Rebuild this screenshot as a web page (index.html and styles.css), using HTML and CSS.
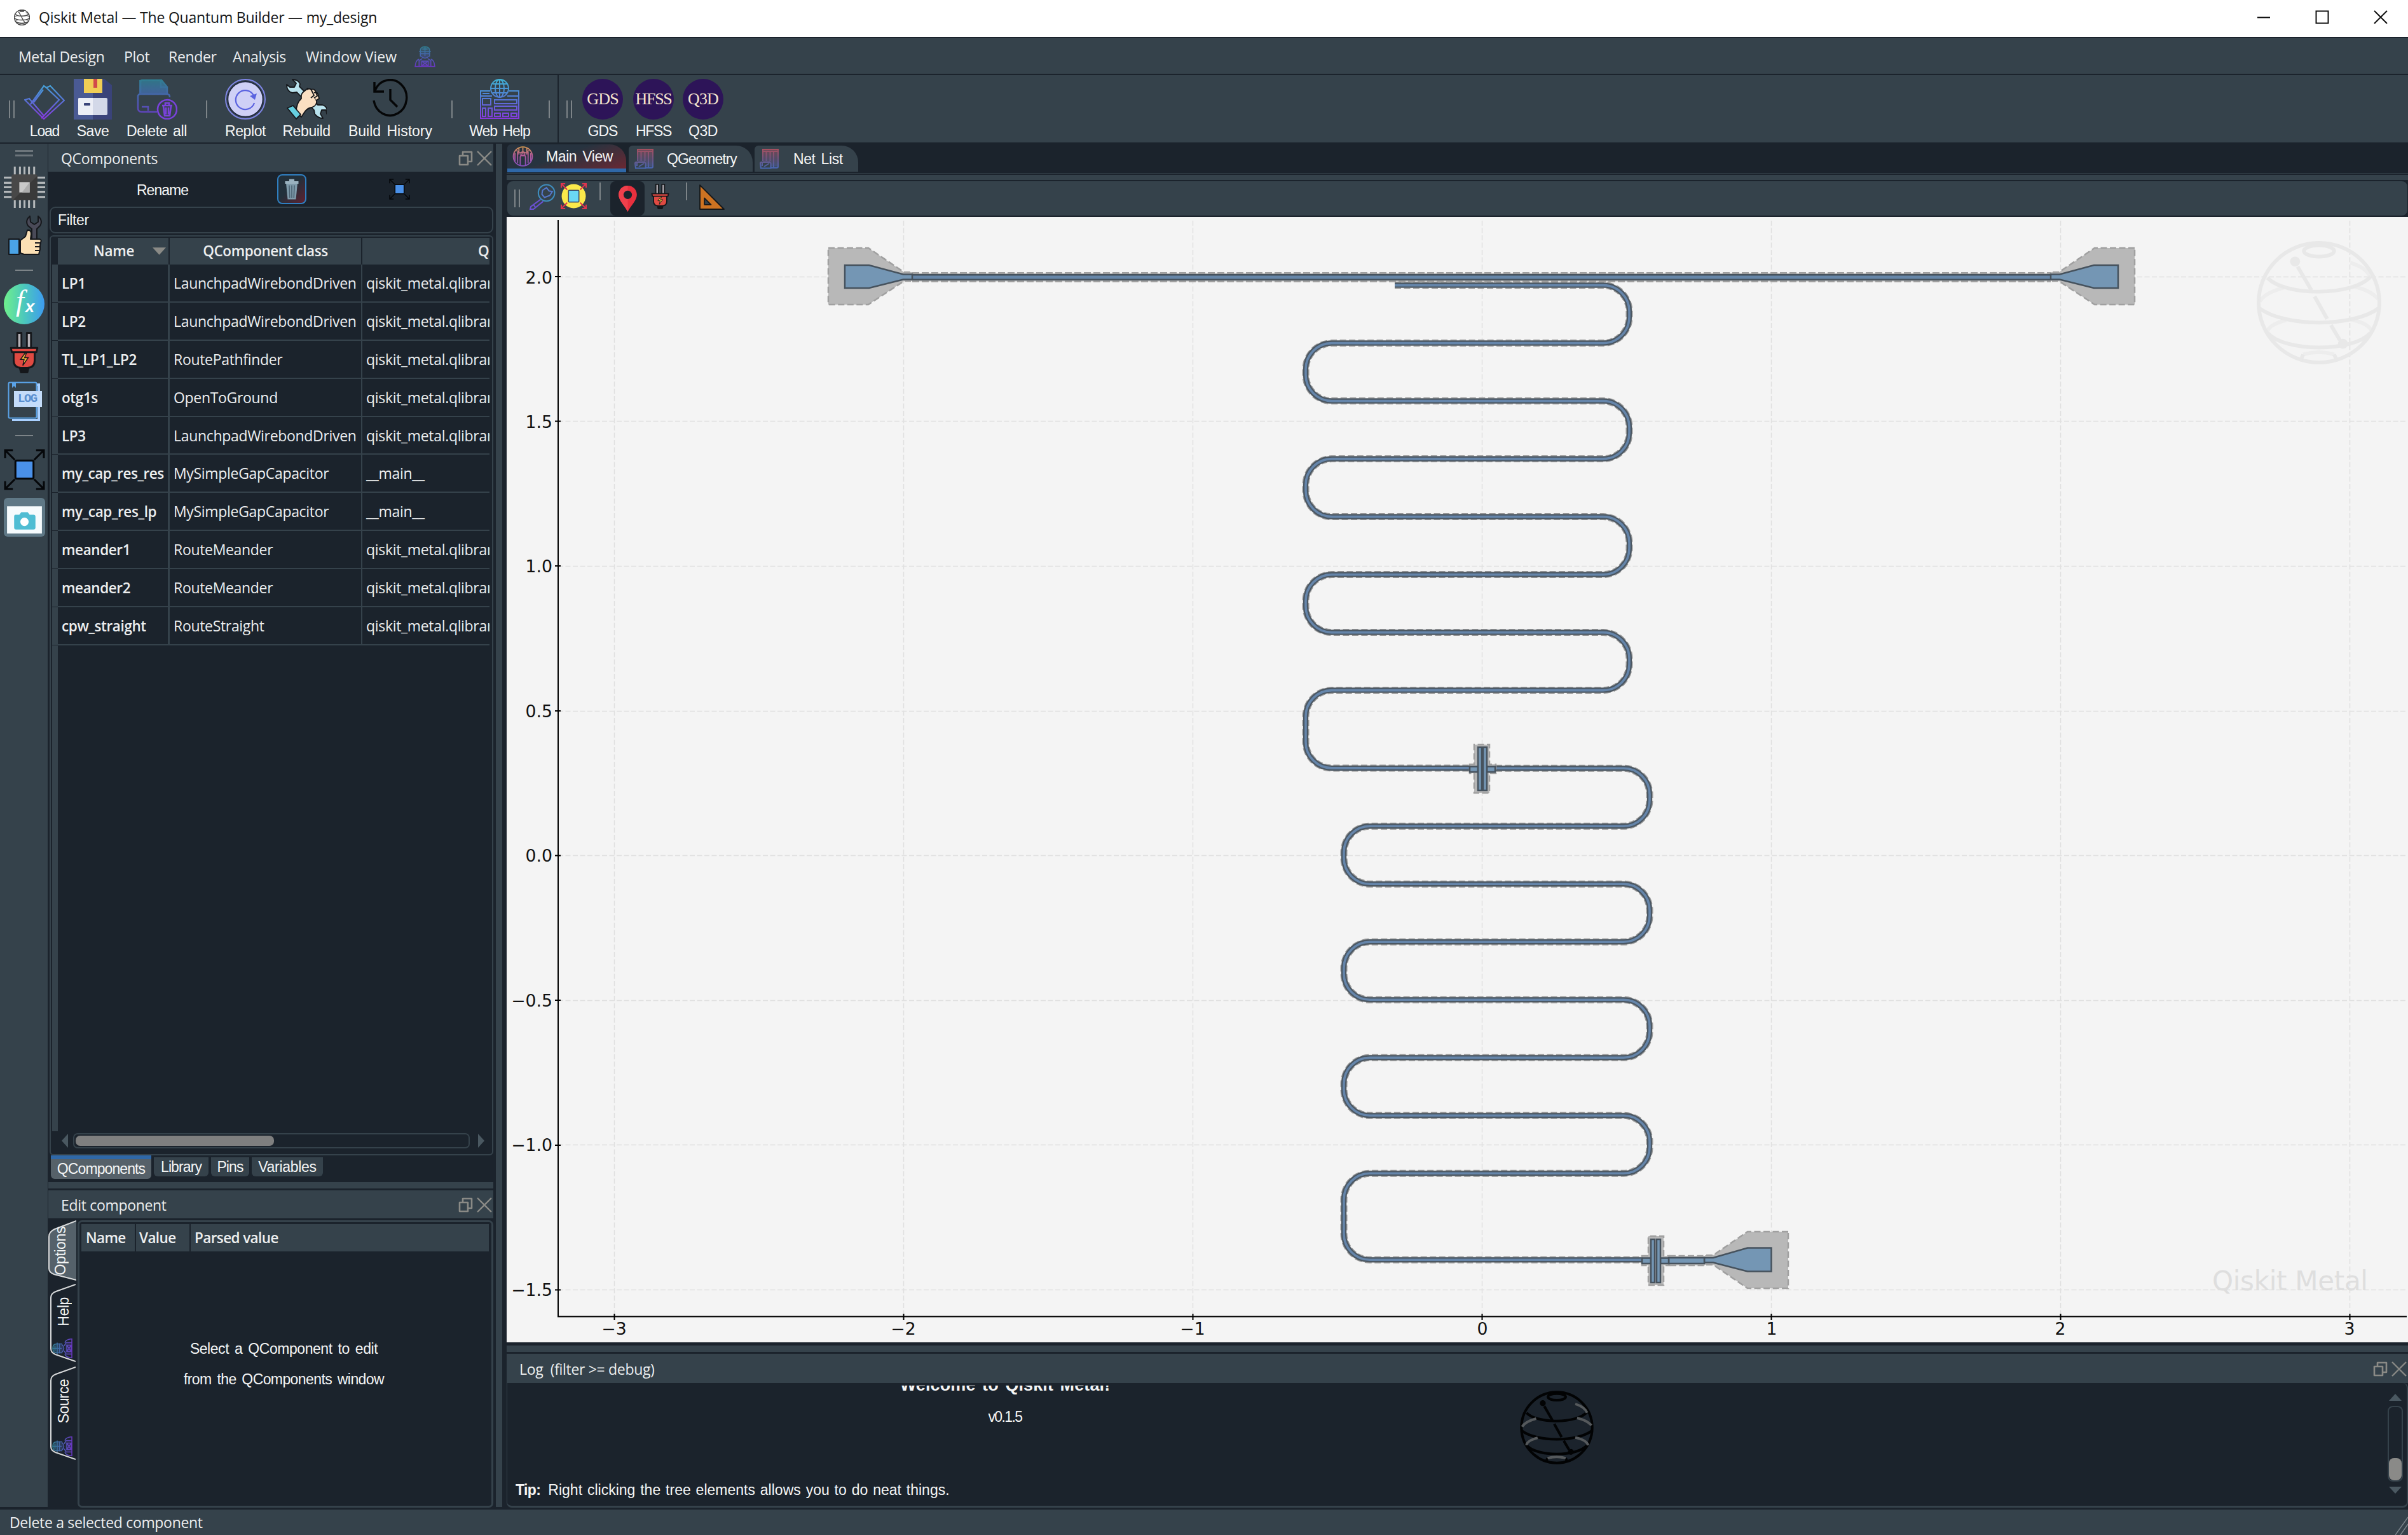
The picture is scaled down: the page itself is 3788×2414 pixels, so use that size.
FILE: index.html
```
<!DOCTYPE html>
<html lang="en">
<head>
<meta charset="utf-8">
<title>Qiskit Metal — The Quantum Builder — my_design</title>
<link rel="stylesheet" href="styles.css">
</head>
<body>
<svg class="defs" aria-hidden="true">
  <defs>
    <linearGradient id="cool" x1="0" y1="0" x2="0" y2="64" gradientUnits="userSpaceOnUse"><stop offset="0" stop-color="#3fb4d6"/><stop offset=".5" stop-color="#5577d6"/><stop offset="1" stop-color="#8a35e0"/></linearGradient>
    <linearGradient id="coolDim" x1="0" y1="0" x2="0" y2="64" gradientUnits="userSpaceOnUse"><stop offset="0" stop-color="#2f7f90"/><stop offset=".5" stop-color="#4a5fb0"/><stop offset="1" stop-color="#6a35c0"/></linearGradient>
    <linearGradient id="warm" x1="0" y1="0" x2="0" y2="64" gradientUnits="userSpaceOnUse"><stop offset="0" stop-color="#d9a04a"/><stop offset=".45" stop-color="#b55a9a"/><stop offset="1" stop-color="#7d4fc0"/></linearGradient>
    <linearGradient id="rose" x1="0" y1="0" x2="0" y2="64" gradientUnits="userSpaceOnUse"><stop offset="0" stop-color="#a8505f"/><stop offset=".5" stop-color="#6f5480"/><stop offset="1" stop-color="#4468b8"/></linearGradient>
    <symbol id="person" viewBox="0 0 64 64">
      <path d="M18 8q14-14 28 0v22q-14 12-28 0z" fill="url(#coolDim)" opacity=".35"/><path d="M14 42h36v18H14z" fill="url(#coolDim)" opacity=".25"/>
      <g fill="none" stroke="url(#coolDim)" stroke-width="3">
        <path d="M18 32V14q0-12 14-12t14 12v18M14 16h36M16 23h32M20 31q12 12 24 0M24 9h16M32 2v28M14 40q-10 2-12 22h60q-2-20-12-22M24 38l-10 6v18M40 38l10 6v18M22 46h20v14H22zM22 46l20 14M42 46L22 60"/>
      </g>
    </symbol>
    <symbol id="plug" viewBox="0 0 64 90" >
      <g stroke="#15171b" stroke-width="4" stroke-linejoin="round"><path d="M17 2h9v34h-9zM38 2h9v34h-9z" fill="#b5b1b6"/><path d="M22 76h20l-3 12H25z" fill="#15171b"/><path d="M3 35h58l-2 9H5zM9 44h46v18q0 16-16 16H25Q9 78 9 62z" fill="#e04a42"/></g>
      <path d="M34 46l-10 14h8l-3 13 12-17h-8l4-10z" fill="#f3b53a" stroke="#15171b" stroke-width="2"/>
    </symbol>
    <symbol id="expand" viewBox="0 0 64 64">
      <g fill="none" stroke="#05070a" stroke-width="3"><path d="M2 14V2h12M2 2l15 15M50 2h12v12M62 2L47 17M2 50v12h12M2 62l15-15M62 50v12H50M62 62L47 47"/></g>
      <rect x="18" y="18" width="28" height="28" rx="2" fill="#4a90e8" stroke="#05070a" stroke-width="3"/>
    </symbol>
    <symbol id="globe" viewBox="0 0 200 200">
      <g fill="none" stroke="currentColor">
        <circle cx="100" cy="100" r="96"/>
        <ellipse cx="100" cy="17" rx="24" ry="9"/>
        <path d="M18 60C45 90 155 90 182 58M4 108C45 140 155 140 196 108M18 148C45 180 155 180 182 148M75 183l-4 9M124 183l4 9M66 42l22 38M93 90l20 36M119 136l14 24"/>
        <path opacity=".6" d="M150 36Q176 44 182 60M155 74Q182 80 194 94M6 98Q14 84 44 76M150 127Q180 133 185 148M18 148Q18 136 48 128M75 183Q100 176 124 183"/>
      </g>
      <circle cx="62" cy="34" r="8" fill="currentColor"/><circle cx="138" cy="166" r="8" fill="currentColor"/>
    </symbol>
    <symbol id="float" viewBox="0 0 24 24"><path d="M7 8V2h14v15h-6M2 8h13v14H2z" fill="none" stroke="#8a8a86" stroke-width="2.6" stroke-linejoin="round"/></symbol>
    <symbol id="close" viewBox="0 0 24 24"><path d="M1 1l22 22M23 1L1 23" fill="none" stroke="#8a8a86" stroke-width="2.4"/></symbol>
    <symbol id="sheet" viewBox="0 0 64 64">
      <path d="M10 2h48v54H36V40H10z" fill="url(#rose)" opacity=".5"/>
      <path d="M10 38V2h48v54q0 4-5 4h-9V8M21 6v32M33 6v34M10 8h46M2 46q0-4 4-4h24q5 0 5 5v14H4zM8 42v12M14 56l16-10M36 60h10" fill="none" stroke="url(#rose)" stroke-width="4"/>
    </symbol>
  </defs>
</svg>

<header class="titlebar">
  <svg class="app-icon" viewBox="0 0 200 200"><use href="#globe"/></svg>
  <span class="ui app-title">Qiskit Metal — The Quantum Builder — my_design</span>
  <div class="window-controls">
    <svg viewBox="0 0 22 22"><path d="M1 11.500h20" /></svg>
    <svg viewBox="0 0 22 22"><rect x="1.500" y="1.500" width="19" height="19"/></svg>
    <svg viewBox="0 0 22 22"><path d="M1 1l20 20M21 1L1 21"/></svg>
  </div>
</header>

<nav class="menubar ui">
  <span class="m1">Metal Design</span><span class="m2">Plot</span><span class="m3">Render</span><span class="m4">Analysis</span><span class="m5">Window View</span>
  <svg class="menu-icon"><use href="#person"/></svg>
</nav>

<div class="toolbar">
  <i class="handle"></i>
  <div class="tool t-load"><svg viewBox="0 0 64 64"><g fill="none" stroke="url(#cool)" stroke-width="2.200"><path d="M10 40L31 11l4 3 6-3 22 23-32 29L1 33l7-2 23 27 24-25-20-19M30 17L15 37M27 62l4-4"/></g></svg><span>Load</span></div>
  <div class="tool t-save"><svg viewBox="0 0 64 64"><path d="M2 0h48l12 10v54H2z" fill="#3a4379"/><path d="M2 0h30v64H2z" fill="#4a5a94"/><path d="M18 0h29v22H18z" fill="#f0cd55"/><path d="M33 0h6v14h-6z" fill="#d24a4a"/><rect x="9" y="30" width="46" height="27" rx="2" fill="#d3d8e8"/><path d="M11 30h21v27H11q-2 0-2-2V32q0-2 2-2z" fill="#eceef6"/><rect x="18" y="38" width="10" height="4" rx="1" fill="#3a4379"/></svg><span>Save</span></div>
  <div class="tool t-delete"><svg viewBox="0 0 64 64"><path d="M4 2h36l8 10v13H4z" fill="url(#coolDim)" opacity=".85"/><g fill="none" stroke="url(#coolDim)" stroke-width="2.500"><path d="M6 22V5q0-3 3-3h30l9 11v11M38 2v11h10M2 28q0-4 4-4h42q4 0 4 5M2 26v20q0 6 6 6h24M8 44h10v6"/></g><g fill="none" stroke="#7a42dc" stroke-width="2.600"><ellipse cx="48" cy="48" rx="15" ry="15"/><path d="M40 42h16M45 42v-4h6v4M42 43l2 15h8l2-15M46 45v11M50 45v11"/></g></svg><span>Delete all</span></div>
  <i class="sep s1"></i>
  <div class="tool t-replot"><svg viewBox="0 0 64 64"><circle cx="32" cy="32" r="31" fill="none" stroke="#7f86e6" stroke-width="2"/><circle cx="32" cy="32" r="27.500" fill="#cfd0f6" stroke="#1d2340" stroke-width="1.500"/><path d="M45 26a15 15 0 1 0 1 12" fill="none" stroke="#5a62e0" stroke-width="2.200"/><path d="M50 23l-3 10-8-6z" fill="#5a62e0"/></svg><span>Replot</span></div>
  <div class="tool t-rebuild"><svg viewBox="0 0 64 64"><g stroke="#15171b" stroke-width="1.800" stroke-linejoin="round"><path d="M10 1l6 6-3 6-7 0-5-4q0 11 9 13l7-1 27 28 1 6q5 7 13 7l-4-7 2-6 7 0 1 6q3-11-7-14l-7 0-29-29 1-4q-3-7-12-7z" fill="#b9e3ee"/><path d="M16 52q0-14 8-21-1-8 4-11l6-5q6 2 9 9l5 11q1 7-8 10-6 1-10 6l-6 9z" fill="#fadfc2"/><path d="M33 17q5-3 7 1l4 8-5 4M39 17q5-2 7 2l3 8-5 3M44 22q5-2 6 2l2 7-5 3" fill="#fadfc2"/><path d="M2 46l9-4 12 14-7 7z" fill="#66cfe0"/></g></svg><span>Rebuild</span></div>
  <div class="tool t-history"><svg viewBox="0 0 64 64"><path d="M8 18A26 28 0 1 1 6 34M7 5v15h15M32 16v17l11 11" fill="none" stroke="#050607" stroke-width="3.400"/></svg><span>Build History</span></div>
  <i class="sep s2"></i>
  <div class="tool t-web"><svg viewBox="0 0 64 64"><g fill="none" stroke="url(#cool)" stroke-width="2"><path d="M17 19H2v43h60V19H47M2 27h18M44 27h18M5 23h11M5 31h13v10H5zM5 46h5v13H5zM14 46h6v13h-6zM24 33h35v6H24zM24 43h35v6H24zM24 54h9v5h-9zM37 54h9v5h-9zM50 54h9v5h-9z"/><circle cx="32" cy="15" r="14"/><ellipse cx="32" cy="15" rx="7" ry="14"/><path d="M32 1v28M18 15h28M21 8h22M21 22h22"/></g></svg><span>Web Help</span></div>
  <i class="sep s3"></i>
  <i class="handle h2"></i>
  <div class="tool t-gds"><b class="disc">GDS</b><span>GDS</span></div>
  <div class="tool t-hfss"><b class="disc">HFSS</b><span>HFSS</span></div>
  <div class="tool t-q3d"><b class="disc">Q3D</b><span>Q3D</span></div>
</div>

<main class="work">
  <aside class="rail">
    <i class="rail-handle"></i>
    <svg class="r-chip" viewBox="0 0 64 64"><path d="M17 0v64M25 0v64M32 0v64M39 0v64M47 0v64M0 17h64M0 25h64M0 32h64M0 39h64M0 47h64" stroke="#b4b8ba" stroke-width="3"/><rect x="12" y="12" width="40" height="40" rx="3" fill="#484848"/><path d="M52 14v36q0 2-2 2H14z" fill="#3a3a3a"/><rect x="24" y="24" width="16" height="16" fill="#c9c9c9"/><path d="M40 24v16H28z" fill="#adadad"/></svg>
    <svg class="r-thumb" viewBox="0 0 54 64"><g stroke="#15171b" stroke-width="2" stroke-linejoin="round"><path d="M35 2q-8 7-3 15l6 5v18h8V22l5-5q5-8-3-15l0 9-6 4-6-4z" fill="#4a4a58"/><path d="M2 38h16v24H2z" fill="#4aa3e6"/><path d="M20 40l8-6 3-10q6-1 6 6l-1 8h14q4 1 2 5l-1 5 0 6-2 8H26l-6-2z" fill="#fbe0b4"/></g><path d="M43 44h10M43 50h9M43 56h8" stroke="#15171b" stroke-width="2"/></svg>
    <i class="rail-sep"></i>
    <div class="r-fx"><span class="fx-f">f</span><span class="fx-x">x</span></div>
    <svg class="r-plug" preserveAspectRatio="none" viewBox="0 0 64 90"><use href="#plug" width="64" height="90"/></svg>
    <div class="r-log"><svg viewBox="0 0 54 62"><path d="M7 61h42V5h-4" fill="none" stroke="#a9d0ff" stroke-width="4"/><rect x="1.500" y="1.500" width="44" height="56" rx="2" fill="#35424b" stroke="#5aa2e6" stroke-width="2"/><path d="M7 2v8l3-3 3 3V2z" fill="#5aa2e6"/><rect x="10" y="15" width="44" height="25" fill="#c4dcfa"/></svg><span>LOG</span></div>
    <i class="rail-sep"></i>
    <svg class="r-expand" viewBox="0 0 64 64"><use href="#expand"/></svg>
    <svg class="r-camera" viewBox="0 0 64 60"><rect width="64" height="60" rx="6" fill="#5f7886"/><path d="M5 13h54v42H5z" fill="#f6fbfd"/><path d="M18 26h6l3-4h10l3 4h6q3 0 3 3v17q0 3-3 3H19q-3 0-3-3V29q0-3 2-3z" fill="#4fbdd3"/><circle cx="32" cy="37" r="6.500" fill="#fff"/></svg>
  </aside>

  <section class="dock">
    <div class="dock-title ui"><span>QComponents</span><svg><use href="#float"/></svg><svg><use href="#close"/></svg></div>
    <div class="actions">
      <span class="rename">Rename</span>
      <span class="trash"><svg viewBox="0 0 28 42"><path d="M3 10h22l-3 30H6z" fill="#7f9bab"/><path d="M1 5h26v5H1zM9 1h10v5H9z" fill="#9ab2c0"/><path d="M9 13l1 24M14 13v24M19 13l-1 24" stroke="#4b6272" stroke-width="2"/></svg></span>
      <svg class="zoom-sel" viewBox="0 0 64 64"><use href="#expand"/></svg>
    </div>
    <div class="filter">Filter</div>
    <div class="table-panel">
      <div class="grid-head bold"><i></i><span class="c-name">Name<svg viewBox="0 0 20 11"><path d="M0 0h20L10 11z" fill="#8a8a86"/></svg></span><span class="c-class">QComponent class</span><span class="c-mod">QComponent module</span></div>
      <div class="grid-row ui"><i></i><b>LP1</b><span>LaunchpadWirebondDriven</span><span>qiskit_metal.qlibrary</span></div>
      <div class="grid-row ui"><i></i><b>LP2</b><span>LaunchpadWirebondDriven</span><span>qiskit_metal.qlibrary</span></div>
      <div class="grid-row ui"><i></i><b>TL_LP1_LP2</b><span>RoutePathfinder</span><span>qiskit_metal.qlibrary</span></div>
      <div class="grid-row ui"><i></i><b>otg1s</b><span>OpenToGround</span><span>qiskit_metal.qlibrary</span></div>
      <div class="grid-row ui"><i></i><b>LP3</b><span>LaunchpadWirebondDriven</span><span>qiskit_metal.qlibrary</span></div>
      <div class="grid-row ui"><i></i><b class="tight">my_cap_res_res</b><span>MySimpleGapCapacitor</span><span>__main__</span></div>
      <div class="grid-row ui"><i></i><b>my_cap_res_lp</b><span>MySimpleGapCapacitor</span><span>__main__</span></div>
      <div class="grid-row ui"><i></i><b>meander1</b><span>RouteMeander</span><span>qiskit_metal.qlibrary</span></div>
      <div class="grid-row ui"><i></i><b>meander2</b><span>RouteMeander</span><span>qiskit_metal.qlibrary</span></div>
      <div class="grid-row ui"><i></i><b>cpw_straight</b><span>RouteStraight</span><span>qiskit_metal.qlibrary</span></div>
      <div class="grid-rest"><i></i></div>
      <div class="hscroll"><svg viewBox="0 0 10 22"><path d="M10 0v22L0 11z"/></svg><div class="htrack"><i></i></div><svg viewBox="0 0 10 22"><path d="M0 0v22l10-11z"/></svg></div>
    </div>
    <div class="dock-tabs"><span class="on">QComponents</span><span class="d2">Library</span><span class="d3">Pins</span><span class="d4">Variables</span></div>
    <div class="band"></div>
    <div class="dock-title ui"><span>Edit component</span><svg><use href="#float"/></svg><svg><use href="#close"/></svg></div>
    <div class="edit">
      <div class="side-tabs">
        <div class="side-tab s-opt"><svg viewBox="0 0 44 95"><path d="M44 1L10 14Q1 18 1 26v50q0 6 8 9l35 9z" fill="#55616a"/><path d="M44 1L10 14Q1 18 1 26v50q0 6 8 9l35 9" fill="none" stroke="#d8dadb" stroke-width="2"/></svg><span>Options</span></div>
        <div class="side-tab s-help"><svg viewBox="0 0 41 123"><path d="M41 1L10 12Q2 15 2 22v80q0 6 7 9l32 11" fill="none" stroke="#d8dadb" stroke-width="2"/></svg><span>Help</span><svg class="s-ico"><use href="#person"/></svg></div>
        <div class="side-tab s-src"><svg viewBox="0 0 41 147"><path d="M41 1L10 12Q2 15 2 22v104q0 6 7 9l32 11" fill="none" stroke="#d8dadb" stroke-width="2"/></svg><span>Source</span><svg class="s-ico"><use href="#person"/></svg></div>
      </div>
      <div class="edit-panel">
        <div class="edit-head bold"><span>Name</span><span>Value</span><span>Parsed value</span></div>
        <div class="edit-msg"><p>Select a QComponent to edit</p><p class="p2">from the QComponents window</p></div>
      </div>
    </div>
  </section>

  <div class="splitter"></div>

  <section class="center">
    <div class="view-tabs">
      <div class="vtab on"><svg viewBox="0 0 64 64"><g fill="none" stroke="url(#warm)" stroke-width="3.500"><circle cx="32" cy="32" r="29"/><path d="M12 14q20 12 40 0M8 22v24M16 16v36M48 16v36M56 22v24M24 60V34q0-6 8-6t8 6v26M32 6v18M20 6v20M44 6v20"/><circle cx="32" cy="24" r="6"/></g></svg><span>Main View</span></div>
      <div class="vtab v2"><svg><use href="#sheet"/></svg><span>QGeometry</span></div>
      <div class="vtab v3"><svg><use href="#sheet"/></svg><span>Net List</span></div>
    </div>
    <div class="view-band"></div>
    <div class="plot-bar">
      <i class="handle"></i>
      <svg class="p-zoom" viewBox="0 0 40 40"><g fill="none" stroke="#5578cc" stroke-width="2"><circle cx="26" cy="14" r="12.500" stroke="#3f8fc0"/><path d="M17 24L2 35l-1 4 5 0 15-12M6 32l3 4" stroke="#6a50d0"/><path d="M26 6l4 5 5 1-4 6-8 3-4-5 1-6z"/></g></svg>
      <svg class="p-home" viewBox="0 0 40 40"><circle cx="20" cy="20" r="18.500" fill="#fbe94a"/><rect x="12" y="11" width="16" height="18" rx="1" fill="#6ad8f5" stroke="#3c4a6a" stroke-width="1.500"/><path d="M1 7V1h6M1 1l9 9M33 1h6v6M39 1l-9 9M1 33v6h6M1 39l9-9M39 33v6h-6M39 39l-9-9" fill="none" stroke="#e0344e" stroke-width="2"/></svg>
      <i class="psep q1"></i>
      <span class="pin-btn"><svg viewBox="0 0 28 40"><path d="M14 0C6 0 0 6 0 14c0 9 9 16 14 26 5-10 14-17 14-26C28 6 22 0 14 0z" fill="#e8303e"/><path d="M14 0C6 0 0 6 0 14c0 9 9 16 14 26z" fill="#f0404c"/><circle cx="14" cy="14" r="6.500" fill="#1b232c"/></svg></span>
      <svg class="p-plug" preserveAspectRatio="none" viewBox="0 0 64 90"><use href="#plug" width="64" height="90"/></svg>
      <i class="psep q2"></i>
      <svg class="p-tri" viewBox="0 0 40 40"><path d="M2 2v37h37zM9 22v10h10z" fill="#cd7322" fill-rule="evenodd" stroke="#14171a" stroke-width="1.800" stroke-linejoin="round"/></svg>
    </div>
    <svg class="plot" viewBox="797 341 2991 1770">
      <path class="gridline" d="M966.500 347V2070M1421.500 347V2070M1876.500 347V2070M2331.500 347V2070M2786.500 347V2070M3241.500 347V2070M3696.500 347V2070M878 435.500H3784M878 662.500H3784M878 890.500H3784M878 1118.500H3784M878 1345.500H3784M878 1573.500H3784M878 1800.500H3784M878 2028.500H3784"/>
      <g class="watermark"><svg x="3549" y="378" width="198" height="196" viewBox="0 0 200 200" preserveAspectRatio="none"><use href="#globe"/></svg>
      <text x="3480" y="2029" textLength="245">Qiskit Metal</text></g>
      <g class="gap">
        <path d="M1303 390H1366L1422 428H1435V442H1422L1366 479H1303z"/>
        <path d="M3358 390H3295L3239 428H3226V442H3239L3295 479H3358z"/>
        <path d="M2813 1937H2749L2695 1974H2682V1989H2695L2749 2026H2813z"/>
        <path d="M2626 1975H2682V1990H2626z"/>
      </g>
      <path class="tl-gap" d="M1435 436H3226"/>
      <path class="tl-edge" d="M1435 429.500H3226M1435 442.500H3226"/>
      <defs>
        <path id="me1" d="M2194 448.600H2522a41 41 0 0 1 41 41v9a41 41 0 0 1-41 41H2095a41 41 0 0 0-41 41v9a41 41 0 0 0 41 41H2522a41 41 0 0 1 41 41v9a41 41 0 0 1-41 41H2095a41 41 0 0 0-41 41v9a41 41 0 0 0 41 41H2522a41 41 0 0 1 41 41v9a41 41 0 0 1-41 41H2095a41 41 0 0 0-41 41v9a41 41 0 0 0 41 41H2522a41 41 0 0 1 41 41v9a41 41 0 0 1-41 41H2095a41 41 0 0 0-41 41v40.300a41 41 0 0 0 41 41H2312"/>
        <path id="me2" d="M2353 1208.300H2554a41 41 0 0 1 41 41v9a41 41 0 0 1-41 41H2155a41 41 0 0 0-41 41v9a41 41 0 0 0 41 41H2554a41 41 0 0 1 41 41v9a41 41 0 0 1-41 41H2155a41 41 0 0 0-41 41v9a41 41 0 0 0 41 41H2554a41 41 0 0 1 41 41v9a41 41 0 0 1-41 41H2155a41 41 0 0 0-41 41v9a41 41 0 0 0 41 41H2554a41 41 0 0 1 41 41v9a41 41 0 0 1-41 41H2155a41 41 0 0 0-41 41v54a41 41 0 0 0 41 41H2583"/>
      </defs>
      <path class="tl-core" d="M1435 436H3226"/><path class="tl-fill" d="M1435 436H3226"/>
      <g class="m-gap"><use href="#me1"/><use href="#me2"/></g>
      <g class="m-edge"><use href="#me1"/><use href="#me2"/></g>
      <g class="m-core"><use href="#me1"/><use href="#me2"/></g>
      <g class="m-fill"><use href="#me1"/><use href="#me2"/></g>
      <g class="gap">
        <path d="M2312 1202H2319V1171H2343V1202H2353V1216H2343V1247H2319V1216H2312z"/>
        <path d="M2583 1975H2593V1944H2617V1975H2626V1990H2617V2021H2593V1990H2583z"/>
      </g>
      <g class="metal">
        <path d="M1329 417H1367L1421 431.500H1435V439.500H1421L1367 453H1329z"/>
        <path d="M3332 417H3294L3240 431.500H3226V439.500H3240L3294 453H3332z"/>
        <path d="M2786.500 1962.500H2749L2695 1978H2681V1985.500H2695L2749 1999.500H2786.500z"/>
        <path d="M2625 1978H2681V1987H2625z"/>
        <path d="M2312 1205.500H2325V1214H2312zM2339 1205.500H2352V1214H2339zM2583 1978.500H2597V1987H2583zM2612 1978.500H2625V1987H2612z"/>
        <path d="M2325 1175H2331V1243H2325zM2333 1175H2339V1243H2333zM2597 1949H2603V2017H2597zM2606 1949H2612V2017H2606z"/>
      </g>
      <path class="axis" d="M878 346V2070.500H3786M873 435H882M873 662.500H882M873 890H882M873 1118H882M873 1345.500H882M873 1573H882M873 1801H882M873 2028.500H882M966.500 2066V2076M1421.500 2066V2076M1876.500 2066V2076M2331.500 2066V2076M2786.500 2066V2076M3241.500 2066V2076M3696.500 2066V2076"/>
      <g class="ticks end"><text x="869" y="446">2.0</text><text x="869" y="673">1.5</text><text x="869" y="900">1.0</text><text x="869" y="1128">0.5</text><text x="869" y="1355">0.0</text><text x="869" y="1583">−0.5</text><text x="869" y="1810">−1.0</text><text x="869" y="2038">−1.5</text></g>
      <g class="ticks mid"><text x="966" y="2099">−3</text><text x="1421" y="2099">−2</text><text x="1876" y="2099">−1</text><text x="2332" y="2099">0</text><text x="2787" y="2099">1</text><text x="3241" y="2099">2</text><text x="3696" y="2099">3</text></g>
    </svg>
    <div class="band log-band"></div>
    <div class="dock-title log-title ui"><span>Log&nbsp; (filter &gt;= debug)</span><svg><use href="#float"/></svg><svg><use href="#close"/></svg></div>
    <div class="log">
      <div class="log-body">
        <div class="log-top">
          <div class="log-welcome"><p class="welcome">Welcome to Qiskit Metal!</p><p class="version">v0.1.5</p></div>
          <svg class="log-logo" viewBox="0 0 200 200"><use href="#globe"/><path d="M150 36Q176 44 182 60M155 74Q182 80 194 94M6 98Q14 84 44 76M150 127Q180 133 185 148M18 148Q18 136 48 128M75 183Q100 176 124 183" fill="none" stroke="#55595c"/></svg>
        </div>
        <p class="tip"><b>Tip:</b><span>Right clicking the tree elements allows you to do neat things.</span></p>
      </div>
      <div class="vscroll"><svg viewBox="0 0 20 11"><path d="M0 11h20L10 0z"/></svg><div class="vtrack"><i></i></div><svg viewBox="0 0 20 11"><path d="M0 0h20L10 11z"/></svg></div>
    </div>
  </section>
</main>

<footer class="status ui"><span>Delete a selected component</span><svg viewBox="0 0 20 30"><path d="M0 30L20 2M8 30L20 13" stroke="#7d868c" stroke-width="1.500"/></svg></footer>
</body>
</html>
```
FILE: styles.css
```
:root{--light:#35424b;--dark:#1b232c;--text:#eceeef;--blue:#2f68a8}
*{box-sizing:border-box}
body{margin:0;width:3788px;height:2414px;overflow:hidden;display:flex;flex-direction:column;background:var(--dark);color:#f4f5f5;font:23px/28px "Liberation Sans",sans-serif;letter-spacing:-.4px;word-spacing:3px}
svg{display:block;flex:none}
p{margin:0}
i{display:block;flex:none}
.defs{position:absolute;width:0;height:0}
.ui{font-family:"Open Sans",sans-serif;font-size:23px;line-height:32px;letter-spacing:-.32px;word-spacing:0;color:var(--text)}
.bold{font-family:"Open Sans",sans-serif;font-weight:600;font-size:22.5px;line-height:32px;letter-spacing:-.45px;word-spacing:0;color:var(--text)}

.titlebar{height:60px;flex:none;background:#fff;border-bottom:2px solid var(--dark);display:flex;align-items:center;padding:0 32px 4px 22px}
.app-icon{width:25px;height:25px;color:#444;stroke-width:11}
.app-title{color:#151515;margin-left:14px;flex:1;letter-spacing:-.2px}
.window-controls{display:flex;gap:70px;fill:none;stroke:#111;stroke-width:2}
.window-controls svg{width:22px;height:22px}

.menubar{height:58px;flex:none;background:var(--light);border-bottom:2px solid var(--dark);display:flex;align-items:center;white-space:nowrap;padding:2px 0 0 29px}
.m1{width:166px}.m2{width:70px}.m3{width:101px}.m4{width:115px}.m5{width:171px}
.m5{letter-spacing:0}
.menu-icon{width:33px;height:34px}

.toolbar{height:108px;flex:none;background:var(--light);border-bottom:2px solid var(--dark);display:flex;padding-top:6px}
.handle{width:14px;height:28px;margin:34px 0 0 14px;border-left:2px solid #7d8488}
.handle::after{content:"";display:block;margin-left:5px;height:28px;border-left:2px solid #7d8488}
.h2{margin-left:12px;width:19px}
.tool{display:flex;flex-direction:column;align-items:center;flex:none;white-space:nowrap}
.tool svg{width:64px;height:64px}
.tool span{margin-top:4px}
.t-load{width:84px;letter-spacing:-1.2px}.t-save{width:68px;letter-spacing:-.5px}.t-delete{width:133px}.t-replot{width:100px}.t-rebuild{width:92px}.t-history{width:172px;letter-spacing:0}.t-web{width:128px;letter-spacing:-1px}.t-gds{width:76px;letter-spacing:-1px}.t-hfss{width:84px;letter-spacing:-1.3px}.t-q3d{width:72px}
.sep{height:100px;padding-top:34px}
.sep::before{content:"";display:block;width:2px;height:28px;margin:0 auto;background:#7d8488}
.s1{width:23px}.s2{width:22px}.s3{width:29px;border-right:2px solid var(--dark);margin-top:-6px;padding-top:40px;height:106px}
.disc{width:64px;height:64px;border-radius:50%;background:#2d1458;color:#f6e6cf;font:26px/64px "Liberation Serif",serif;text-align:center;letter-spacing:-.8px}
.t-hfss .disc{letter-spacing:-1.3px}

.work{height:2147px;flex:none;display:flex}
.rail{width:76px;height:2144px;background:var(--light);border-right:1px solid var(--dark);display:flex;flex-direction:column;align-items:flex-start;flex:none}
.rail-handle{width:28px;height:10px;margin:10px 0 0 24px;border:solid #6c757b;border-width:3px 0}
.r-chip{width:65px;height:65px;margin:16px 0 0 6px}
.r-thumb{width:54px;height:64px;margin:11px 0 0 12px}
.rail-sep{width:28px;height:2px;background:#7d8488;margin:22px 0 0 24px}
.r-fx{width:64px;height:64px;margin:20px 0 0 6px;border-radius:50%;background:linear-gradient(90deg,#6ff08c,#4cc8bc 50%,#3d9bf0);color:#fff;display:flex;padding-left:19px;letter-spacing:0}
.fx-f{font:italic 46px/54px "Liberation Serif",serif}
.fx-x{font:bold italic 26px/72px "Liberation Sans",sans-serif;margin-left:2px}
.r-plug{width:46px;height:65px;margin:12px 0 0 15px}
.r-log{width:54px;height:62px;margin:13px 0 0 12px;display:grid}
.r-log svg,.r-log span{grid-area:1/1}
.r-log span{font:19px/24px "Liberation Mono",monospace;color:#5a8fd0;padding:15px 0 0 16px;letter-spacing:-1.5px;font-weight:bold}
.r-log+.rail-sep{margin-top:22px}
.r-expand{width:65px;height:65px;margin:20px 0 0 6px}
.r-camera{width:65px;height:61px;margin:12px 0 0 6px}

.dock{width:700px;flex:none;display:flex;flex-direction:column}
.dock-title{height:44px;flex:none;background:var(--light);display:flex;align-items:center;padding:1px 2px 0 20px}
.dock-title span{flex:1}
.dock-title svg{width:24px;height:24px;margin-left:5px}
.actions{height:55px;flex:none;display:flex;align-items:center;padding-left:139px}
.rename{width:221px;letter-spacing:-1px;padding-top:2px}
.trash{width:46px;height:47px;border:2px solid #2f7fc1;border-radius:8px;background:linear-gradient(135deg,#22303b 45%,#5f2130);display:flex;align-items:center;justify-content:center}
.trash svg{width:24px;height:34px}
.zoom-sel{width:33px;height:33px;margin-left:130px}
.filter{height:42px;flex:none;margin-left:2px;border:2px solid var(--light);border-radius:9px;padding:5px 0 0 11px}
.table-panel{height:1447px;flex:none;margin:3px 0 0 2px;border:2px solid var(--light);border-radius:6px;padding:2px 4px 0 2px;display:flex;flex-direction:column}
.grid-head,.grid-row{display:grid;grid-template-columns:9px 176px 303px 1fr;white-space:nowrap}
.grid-head{height:42px;align-items:stretch}
.grid-head span{background:var(--light);display:flex;align-items:center;border-right:2px solid var(--dark);overflow:hidden}
.grid-head .c-name{padding-left:56px;letter-spacing:-.2px}
.c-name svg{width:21px;height:12px;margin-left:29px}
.grid-head .c-class{justify-content:center}
.grid-head .c-mod{padding-left:182px;border-right:0}
.grid-row{height:59.9px}
.grid-row i{background:var(--light);border-bottom:1px solid var(--dark)}
.grid-row b,.grid-row span{border-right:2px solid var(--light);border-bottom:2px solid var(--light);overflow:hidden;padding-left:6px;line-height:59px}
.grid-row b{font-weight:600;font-size:22.5px;letter-spacing:-.4px;border-right-width:3px}
.grid-row .tight{letter-spacing:-.5px}
.grid-row span:last-child{border-right:0}
.grid-rest{flex:1}
.grid-rest i{width:9px;height:100%;background:var(--light)}
.hscroll{height:36px;display:flex;align-items:center;padding:0 7px 6px 15px;gap:8px;fill:#4a5861}
.hscroll svg{width:10px;height:22px}
.htrack{width:624px;height:24px;border:2px solid var(--light);border-radius:7px;padding:2px;margin-right:5px}
.htrack i{width:312px;height:16px;border-radius:7px;background:#7f7f7f}
.dock-tabs{height:42px;flex:none;display:flex;padding:0 0 0 4px;align-items:flex-start;letter-spacing:-.9px}
.dock-tabs span{height:30px;margin:3px 0 0 4px;background:var(--light);border-radius:0 0 6px 6px;text-align:center;line-height:30px}
.dock-tabs .on{width:158px;height:37px;margin:0;background:#566169;border-top:6px solid var(--blue);line-height:31px}
.d2{width:86px}.d3{width:60px}.d4{width:112px}.dock-tabs .d4{letter-spacing:-.3px}
.band{height:13px;flex:none;background:var(--light);border-bottom:3px solid var(--dark)}
.edit{display:flex;height:455px;padding-top:3px}
.side-tabs{width:46px;flex:none;display:flex;flex-direction:column}
.side-tab{position:relative;display:flex;flex-direction:column;align-items:flex-start}
.side-tab>svg:first-child{position:absolute;inset:0;width:100%;height:100%}
.side-tab span{writing-mode:vertical-rl;transform:rotate(180deg);line-height:28px}
.s-opt{width:44px;height:95px;padding:10px 0 0 5px;letter-spacing:-.4px}
.s-help{width:41px;height:123px;margin:5px 0 0 2px;padding:21px 0 0 8px}
.s-src{width:41px;height:147px;margin:7px 0 0 2px;padding:20px 0 0 8px;letter-spacing:-.6px}
.s-ico{position:absolute;left:4px;bottom:5px;width:32px;height:33px;transform:rotate(-90deg)}
.edit-panel{flex:1;border:3px solid var(--light);border-radius:7px;padding:3px 4px 0 3px}
.edit-head{height:43px;display:flex;gap:2px}
.edit-head span{background:var(--light);line-height:43px;padding-left:7px;width:84px;white-space:nowrap;letter-spacing:-.6px}
.edit-head span:nth-child(2){padding-left:5px}
.edit-head span:last-child{flex:1;padding-left:6px}
.edit-msg{text-align:center;padding:129px 4px 0 0;line-height:48px}
.edit-msg p{letter-spacing:-.45px}
.edit-msg .p2{letter-spacing:-.6px}

.splitter{width:21px;height:2144px;flex:none;background:linear-gradient(90deg,var(--dark) 4px,var(--light) 4px 14px,var(--dark) 14px)}
.center{width:2991px;flex:none;display:flex;flex-direction:column}
.view-tabs{height:47px;flex:none;display:flex;padding:1px 0 0 1px;border-bottom:1px solid var(--light)}
.vtab{display:flex;align-items:center;border-radius:6px 26px 0 0;background:var(--light)}
.vtab.on{width:187px;height:44px;border-bottom:6px solid var(--blue);background:linear-gradient(160deg,#27333f 45%,#6a2833);padding-left:8px;letter-spacing:-.4px}
.vtab.on svg{width:33px;height:34px;margin-right:20px}
.vtab svg{width:32px;height:34px}
.v2{width:195px;height:41px;margin:2px 0 0 4px;padding-left:9px;letter-spacing:-1px}
.v3{width:163px;height:41px;margin:2px 0 0 3px;padding-left:8px}
.v2 svg{margin-right:19px}.v3 svg{margin-right:21px}
.view-band{height:10px;flex:none;background:var(--light);border-top:2px solid var(--dark)}
.plot-bar{height:58px;flex:none;background:var(--light);border:solid var(--dark);border-width:2px 1px 2px 1px;border-radius:10px;display:flex;align-items:flex-start}
.plot-bar .handle{margin:13px 0 0 11px}
.p-zoom{width:41px;height:41px;margin:4px 0 0 10px}
.p-home{width:41px;height:41px;margin:3px 0 0 8px}
.psep{width:2px;height:28px;background:#7d8488;margin-top:2px}
.q1{margin-left:20px}
.pin-btn{width:54px;height:54px;margin-left:15px;background:var(--dark);border-radius:8px;display:flex;align-items:center;justify-content:center}
.pin-btn svg{width:29px;height:41px}
.p-plug{width:29px;height:40px;margin:4px 0 0 10px}
.q2{margin-left:26px}
.p-tri{width:41px;height:41px;margin:4px 0 0 18px}
.plot{width:2991px;height:1770px;background:#f4f4f4}
.gridline{stroke:#e0e0e0;stroke-width:1.5;stroke-dasharray:8 3.5;fill:none}
.watermark{color:#e8e8e8;stroke-width:6}
.watermark text{font:42px "DejaVu Sans",sans-serif;fill:#dedede;stroke:none;letter-spacing:0;word-spacing:0}
.gap{fill:#b8b8b8;stroke:#a0a0a0;stroke-width:2.5;stroke-dasharray:10 4.500}
.metal{fill:#7496b4;stroke:#46525d;stroke-width:2.5}
.tl-gap{stroke:#b6b6b6;stroke-width:13;fill:none}
.tl-edge{stroke:#a0a0a0;stroke-width:3;stroke-dasharray:11 4;fill:none}
.tl-core{stroke:#46525d;stroke-width:10}
.tl-fill{stroke:#6686a8;stroke-width:5}
.m-gap,.m-edge,.m-core,.m-fill{fill:none}
.m-gap{stroke:#b8b8b8;stroke-width:9}
.m-edge{stroke:#989898;stroke-width:11;stroke-dasharray:10 4.500}
.m-core{stroke:#4b5762;stroke-width:8}
.m-fill{stroke:#6585aa;stroke-width:3.6}
.axis{fill:none;stroke:#000;stroke-width:2}
.ticks{font:26.7px "DejaVu Sans",sans-serif;letter-spacing:0;word-spacing:0;fill:#111}
.end{text-anchor:end}.mid{text-anchor:middle}
.log-band{height:18px;border-top:5px solid var(--dark)}
.log-title{height:46px}
.log{height:196px;flex:none;border:solid var(--light);border-width:0 2px 3px 1px;border-radius:0 8px 8px 8px;display:flex;padding-top:4px}
.log-body{width:2958px;padding-left:13px}
.log-top{height:149px;display:flex;overflow:hidden}
.log-welcome{width:1540px;text-align:center}
.welcome{font-weight:bold;font-size:27px;line-height:30px;margin-top:-16px;letter-spacing:.1px}
.version{margin-top:21px;letter-spacing:-1.6px}
.log-logo{width:116px;height:116px;margin:8px 0 0 40px;color:#020304;stroke-width:7}
.tip{display:flex;gap:12px;margin-top:1px;white-space:nowrap}
.tip b{letter-spacing:-.6px}
.tip span{letter-spacing:0;word-spacing:1.5px}
.vscroll{width:24px;display:flex;flex-direction:column;align-items:center;padding-top:13px;fill:#4a5861;gap:8px}
.vscroll svg{width:20px;height:11px}
.vtrack{width:24px;height:119px;border:2px solid var(--light);border-radius:8px;padding-top:80px}
.vtrack i{width:20px;height:35px;border-radius:8px;background:#8a8a88}

.status{height:41px;flex:none;background:var(--light);border-top:1px solid var(--dark);display:flex;align-items:center;justify-content:space-between;padding-left:15px}
.status svg{width:20px;height:30px;align-self:flex-end}
```
